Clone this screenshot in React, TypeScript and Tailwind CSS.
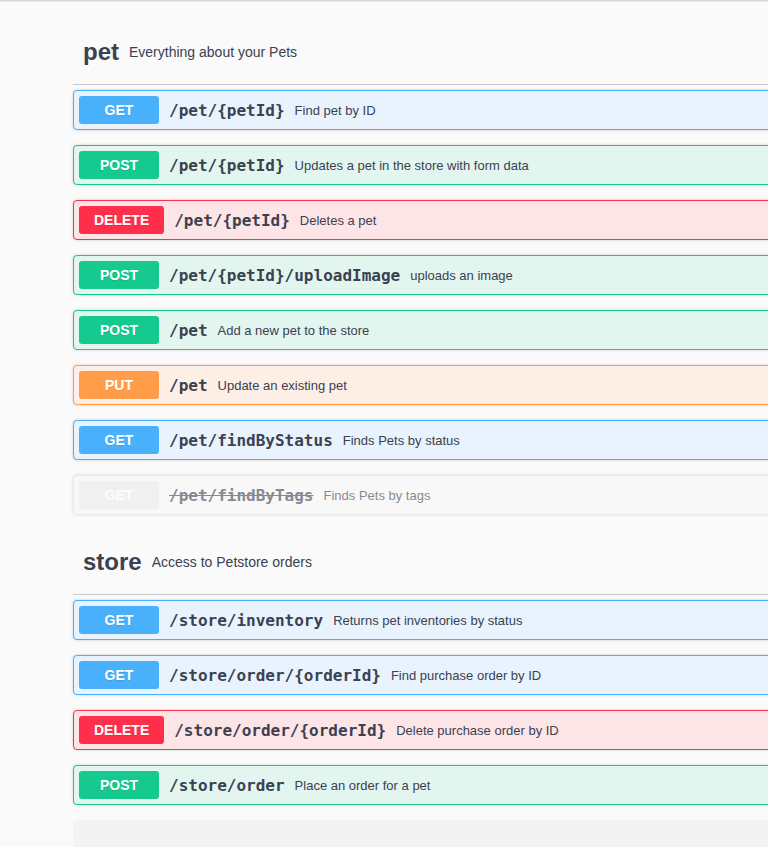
type Method = "GET" | "POST" | "DELETE" | "PUT"

type Op = {
  method: Method
  path: string
  summary: string
  deprecated?: boolean
}

const styles: Record<Method, { block: string; badge: string }> = {
  GET: { block: "bg-[#e8f3fd] border-[#49b0fb]", badge: "bg-[#49b0fb]" },
  POST: { block: "bg-[#e2f6ef] border-[#15c98f]", badge: "bg-[#15c98f]" },
  DELETE: { block: "bg-[#fde5e7] border-[#ff2e4a]", badge: "bg-[#ff2e4a]" },
  PUT: { block: "bg-[#fdefe5] border-[#ff9d4a]", badge: "bg-[#ff9d4a]" },
}

const petOps: Op[] = [
  { method: "GET", path: "/pet/{petId}", summary: "Find pet by ID" },
  { method: "POST", path: "/pet/{petId}", summary: "Updates a pet in the store with form data" },
  { method: "DELETE", path: "/pet/{petId}", summary: "Deletes a pet" },
  { method: "POST", path: "/pet/{petId}/uploadImage", summary: "uploads an image" },
  { method: "POST", path: "/pet", summary: "Add a new pet to the store" },
  { method: "PUT", path: "/pet", summary: "Update an existing pet" },
  { method: "GET", path: "/pet/findByStatus", summary: "Finds Pets by status" },
  { method: "GET", path: "/pet/findByTags", summary: "Finds Pets by tags", deprecated: true },
]

const storeOps: Op[] = [
  { method: "GET", path: "/store/inventory", summary: "Returns pet inventories by status" },
  { method: "GET", path: "/store/order/{orderId}", summary: "Find purchase order by ID" },
  { method: "DELETE", path: "/store/order/{orderId}", summary: "Delete purchase order by ID" },
  { method: "POST", path: "/store/order", summary: "Place an order for a pet" },
]

const OpBlock = ({ op }: { op: Op }) => {
  if (op.deprecated) {
    return (
      <div className="flex items-center h-[40px] mb-[15px] p-[5px] border border-[#ebebeb] bg-[#f8f8f8] rounded-[4px] shadow-[0_0_3px_rgba(0,0,0,0.12)]">
        <div className="opacity-60 flex items-center">
          <span className="min-w-[80px] h-[28px] px-[15px] flex items-center justify-center rounded-[3px] bg-[#ebebeb] text-white text-[14px] font-bold font-['Liberation_Sans',sans-serif]">
            {op.method}
          </span>
          <span className="px-[10px] pt-[2px] text-[16px] font-bold text-[#3b4151] line-through font-['DejaVu_Sans_Mono',monospace]">
            {op.path}
          </span>
          <span className="pt-[2px] text-[13px] text-[#3b4151] font-['Liberation_Sans',sans-serif]">{op.summary}</span>
        </div>
      </div>
    )
  }
  const s = styles[op.method]
  return (
    <div className={`flex items-center h-[40px] mb-[15px] p-[5px] border rounded-[4px] shadow-[0_0_3px_rgba(0,0,0,0.19)] ${s.block}`}>
      <span className={`min-w-[80px] h-[28px] px-[15px] flex items-center justify-center rounded-[3px] text-white text-[14px] font-bold font-['Liberation_Sans',sans-serif] [text-shadow:0_1px_0_rgba(0,0,0,0.1)] ${s.badge}`}>
        {op.method}
      </span>
      <span className="px-[10px] pt-[2px] text-[16px] font-bold text-[#3b4151] font-['DejaVu_Sans_Mono',monospace]">
        {op.path}
      </span>
      <span className="pt-[2px] text-[13px] text-[#3b4151] font-['Liberation_Sans',sans-serif]">{op.summary}</span>
    </div>
  )
}

const TagSection = ({ name, desc, ops }: { name: string; desc: string; ops: Op[] }) => (
  <div>
    <div className="flex items-center h-[65px] mb-[5px] pl-[10px] border-b border-[#c8c9cc]">
      <h3 className="text-[24px] font-bold text-[#3b4151] font-['Liberation_Sans',sans-serif]">{name}</h3>
      <small className="px-[10px] text-[14px] text-[#3b4151] font-['Liberation_Sans',sans-serif]">{desc}</small>
    </div>
    {ops.map((op, i) => (
      <OpBlock key={i} op={op} />
    ))}
  </div>
)

const App = () => {
  return (
    <div className="w-full h-[847px] overflow-hidden bg-[#fafafa]">
      <div className="h-[1px] bg-[#d6d6d6]" />
      <div className="h-[1px] bg-[#ececec]" />
      <div className="w-[1460px] pl-[73px] pt-[18px]">
        <TagSection name="pet" desc="Everything about your Pets" ops={petOps} />
        <TagSection name="store" desc="Access to Petstore orders" ops={storeOps} />
        <div className="h-[120px] rounded-[4px] bg-[#f3f3f3]" />
      </div>
    </div>
  )
}

export default App
